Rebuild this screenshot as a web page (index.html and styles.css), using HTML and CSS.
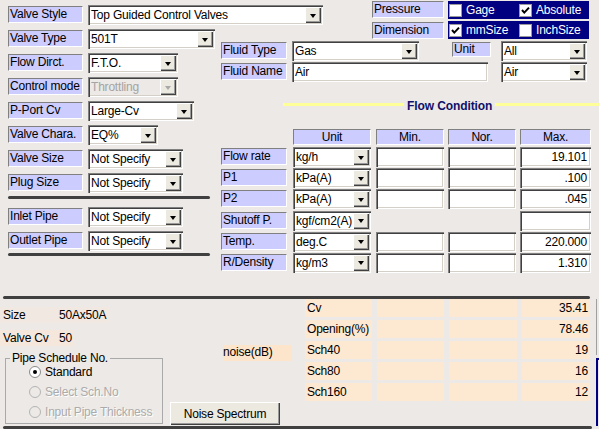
FILE: index.html
```html
<!DOCTYPE html>
<html>
<head>
<meta charset="utf-8">
<title>Valve Sizing</title>
<link rel="stylesheet" href="styles.css">
</head>
<body>
<div class="page">
  <div class="top">
    <div class="left">
      <div class="row"><span class="lab">Valve Style</span><div class="sel w235"><span class="txt">Top Guided Control Valves</span><span class="arr"></span></div></div>
      <div class="row"><span class="lab">Valve Type</span><div class="sel w127"><span class="txt">501T</span><span class="arr"></span></div></div>
      <div class="row"><span class="lab">Flow Dirct.</span><div class="sel w90"><span class="txt">F.T.O.</span><span class="arr"></span></div></div>
      <div class="row"><span class="lab">Control mode</span><div class="sel w90 dis"><span class="txt">Throttling</span><span class="arr"></span></div></div>
      <div class="row"><span class="lab">P-Port Cv</span><div class="sel w106"><span class="txt">Large-Cv</span><span class="arr"></span></div></div>
      <div class="row"><span class="lab">Valve Chara.</span><div class="sel w70"><span class="txt">EQ%</span><span class="arr"></span></div></div>
      <div class="row"><span class="lab">Valve Size</span><div class="sel w95"><span class="txt">Not Specify</span><span class="arr"></span></div></div>
      <div class="row"><span class="lab">Plug Size</span><div class="sel w95"><span class="txt">Not Specify</span><span class="arr"></span></div></div>
      <div class="sep sep1"></div>
      <div class="row"><span class="lab">Inlet Pipe</span><div class="sel w95"><span class="txt">Not Specify</span><span class="arr"></span></div></div>
      <div class="row"><span class="lab">Outlet Pipe</span><div class="sel w95"><span class="txt">Not Specify</span><span class="arr"></span></div></div>
      <div class="sep sep2"></div>
    </div>

    <div class="right">
      <div class="opts">
        <div class="optlabs">
          <span class="lab">Pressure</span>
          <span class="lab">Dimension</span>
        </div>
        <div class="navyrows">
          <div class="navy">
            <span class="chk"><svg width="13" height="13" viewBox="0 0 13 13"><rect x="0.5" y="0.5" width="12" height="12" fill="#fff" stroke="#9a9a9a"/></svg>Gage</span>
            <span class="chk"><svg width="13" height="13" viewBox="0 0 13 13"><rect x="0.5" y="0.5" width="12" height="12" fill="#fff" stroke="#9a9a9a"/><polyline points="3,6 5.3,8.6 10,3.6" fill="none" stroke="#000" stroke-width="2"/></svg>Absolute</span>
          </div>
          <div class="navy">
            <span class="chk"><svg width="13" height="13" viewBox="0 0 13 13"><rect x="0.5" y="0.5" width="12" height="12" fill="#fff" stroke="#9a9a9a"/><polyline points="3,6 5.3,8.6 10,3.6" fill="none" stroke="#000" stroke-width="2"/></svg>mmSize</span>
            <span class="chk"><svg width="13" height="13" viewBox="0 0 13 13"><rect x="0.5" y="0.5" width="12" height="12" fill="#fff" stroke="#9a9a9a"/></svg>InchSize</span>
          </div>
        </div>
      </div>

      <div class="frow f1">
        <span class="lab flab">Fluid Type</span>
        <div class="sel fsel"><span class="txt">Gas</span><span class="arr"></span></div>
        <span class="lab ulab">Unit</span>
        <div class="sel usel"><span class="txt">All</span><span class="arr"></span></div>
      </div>
      <div class="frow f2">
        <span class="lab flab">Fluid Name</span>
        <div class="inp finp"><span class="txt">Air</span></div>
        <div class="sel usel u2"><span class="txt">Air</span><span class="arr"></span></div>
      </div>

      <div class="fc"><span class="ln ln1"></span><span class="fctext">Flow Condition</span><span class="ln ln2"></span></div>

      <div class="thead">
        <span class="c-lab"></span>
        <span class="lab hc c-unit">Unit</span>
        <span class="lab hc c-min">Min.</span>
        <span class="lab hc c-nor">Nor.</span>
        <span class="lab hc c-max">Max.</span>
      </div>
      <div class="tbody">
        <div class="trow">
          <span class="lab c-lab">Flow rate</span>
          <div class="sel c-unit"><span class="txt">kg/h</span><span class="arr"></span></div>
          <div class="inp c-min"></div><div class="inp c-nor"></div>
          <div class="inp c-max num">19.101</div>
        </div>
        <div class="trow">
          <span class="lab c-lab">P1</span>
          <div class="sel c-unit"><span class="txt">kPa(A)</span><span class="arr"></span></div>
          <div class="inp c-min"></div><div class="inp c-nor"></div>
          <div class="inp c-max num">.100</div>
        </div>
        <div class="trow">
          <span class="lab c-lab">P2</span>
          <div class="sel c-unit"><span class="txt">kPa(A)</span><span class="arr"></span></div>
          <div class="inp c-min"></div><div class="inp c-nor"></div>
          <div class="inp c-max num">.045</div>
        </div>
        <div class="trow">
          <span class="lab c-lab">Shutoff P.</span>
          <div class="sel c-unit"><span class="txt">kgf/cm2(A)</span><span class="arr"></span></div>
          <div class="inp c-min hide"></div><div class="inp c-nor hide"></div>
          <div class="inp c-max num"></div>
        </div>
        <div class="trow">
          <span class="lab c-lab">Temp.</span>
          <div class="sel c-unit"><span class="txt">deg.C</span><span class="arr"></span></div>
          <div class="inp c-min"></div><div class="inp c-nor"></div>
          <div class="inp c-max num">220.000</div>
        </div>
        <div class="trow">
          <span class="lab c-lab">R/Density</span>
          <div class="sel c-unit"><span class="txt">kg/m3</span><span class="arr"></span></div>
          <div class="inp c-min"></div><div class="inp c-nor"></div>
          <div class="inp c-max num">1.310</div>
        </div>
      </div>
    </div>
  </div>

  <div class="hsep"></div>

  <div class="bottom">
    <div class="bl">
      <div class="colA">
        <div class="info i1"><span class="ik">Size</span><span class="iv">50Ax50A</span></div>
        <div class="info i2"><span class="ik">Valve Cv</span><span class="iv">50</span></div>
        <fieldset class="grp">
          <legend>Pipe Schedule No.</legend>
          <div class="radios">
            <div class="rad"><svg width="12" height="12" viewBox="0 0 12 12"><circle cx="6" cy="6" r="5.5" fill="#fff" stroke="#8a8a8a"/><circle cx="6" cy="6" r="2" fill="#000"/></svg><span>Standard</span></div>
            <div class="rad off"><svg width="12" height="12" viewBox="0 0 12 12"><circle cx="6" cy="6" r="5.5" fill="#ece9e6" stroke="#b4b4b4"/></svg><span>Select Sch.No</span></div>
            <div class="rad off"><svg width="12" height="12" viewBox="0 0 12 12"><circle cx="6" cy="6" r="5.5" fill="#ece9e6" stroke="#b4b4b4"/></svg><span>Input Pipe Thickness</span></div>
          </div>
        </fieldset>
      </div>
      <div class="colB">
        <span class="noise">noise(dB)</span>
        <button class="btn" type="button">Noise Spectrum</button>
      </div>
    </div>
    <div class="br">
      <span class="pc pl">Cv</span><span class="pc"></span><span class="pc"></span><span class="pc pv">35.41</span>
      <span class="pc pl">Opening(%)</span><span class="pc"></span><span class="pc"></span><span class="pc pv">78.46</span>
      <span class="pc pl">Sch40</span><span class="pc"></span><span class="pc"></span><span class="pc pv">19</span>
      <span class="pc pl">Sch80</span><span class="pc"></span><span class="pc"></span><span class="pc pv">16</span>
      <span class="pc pl">Sch160</span><span class="pc"></span><span class="pc"></span><span class="pc pv">12</span>
    </div>
    <div class="edge"><span class="edge-top"></span><span class="edge-nav"></span></div>
  </div>

  <div class="hsep hsep2"></div>
</div>
</body>
</html>
```

FILE: styles.css
```css
* { box-sizing: border-box; }

body {
  margin: 0;
  background: #ece9e6;
  font-family: "Liberation Sans", Arial, sans-serif;
  font-size: 12px;
  letter-spacing: -0.2px;
  color: #000;
}

.page {
  width: 599px;
  height: 429px;
  overflow: hidden;
}

/* ---------- generic controls ---------- */
.lab {
  display: block;
  flex-shrink: 0;
  background: #ccccff;
  border: 1px solid;
  border-color: #808080 #ffffff #ffffff #808080;
  height: 17px;
  line-height: 15px;
  padding-left: 1px;
  white-space: nowrap;
  overflow: hidden;
}

.sel, .inp {
  display: flex;
  flex-shrink: 0;
  height: 20px;
  padding: 2px;
  background: #fff;
  box-shadow: inset 1px 1px #808080, inset 2px 2px #404040,
              inset -1px -1px #ffffff, inset -2px -2px #d4d0c8;
  white-space: nowrap;
  overflow: hidden;
}

.txt {
  flex: 1;
  min-width: 0;
  overflow: hidden;
  line-height: 16px;
  padding-left: 1px;
}

.arr {
  flex-shrink: 0;
  width: 16px;
  height: 16px;
  background: #ece9e0;
  box-shadow: inset 1px 1px #ffffff, inset -1px -1px #404040, inset -2px -2px #9a9a9a;
  display: flex;
  align-items: center;
  justify-content: center;
}

.arr::after {
  content: "";
  width: 0;
  height: 0;
  border-style: solid;
  border-width: 4px 3.5px 0 3.5px;
  border-color: #000 transparent transparent transparent;
  margin-top: 1px;
}

.sel.dis { background: #ece9e6; }
.sel.dis .txt { color: #a4a4a4; }
.sel.dis .arr::after { border-top-color: #a8a8a8; }

/* ---------- top area ---------- */
.top {
  display: flex;
  height: 296px;
}

.left {
  width: 221px;
  flex-shrink: 0;
  padding: 5px 0 0 8px;
  display: flex;
  flex-direction: column;
  gap: 4px;
}

.row {
  display: flex;
  align-items: flex-start;
  gap: 5px;
  height: 20px;
}

.left .lab {
  width: 75px;
  margin-top: 1px;
}

.w235 { width: 235px; }
.w127 { width: 127px; }
.w90 { width: 90px; }
.w106 { width: 106px; }
.w70 { width: 70px; }
.w95 { width: 95px; }

.sep {
  width: 202px;
  height: 3px;
  background: #404040;
  border-radius: 2px;
}
.sep1 { margin: -1px 0 4px; }
.sep2 { margin-top: -2px; }

.right {
  flex: 1;
  display: flex;
  flex-direction: column;
}

.opts {
  display: flex;
  gap: 4px;
  margin: 1px 0 0 151px;
}

.optlabs {
  display: flex;
  flex-direction: column;
  gap: 4px;
}
.optlabs .lab { width: 72px; }

.navyrows {
  display: flex;
  flex-direction: column;
  gap: 2px;
}

.navy {
  width: 141px;
  height: 18px;
  background: #000080;
  color: #fff;
  display: flex;
  align-items: center;
  padding-left: 1px;
}

.chk {
  display: flex;
  align-items: center;
  gap: 4px;
  width: 72px;
}
.chk svg { flex-shrink: 0; }

.frow {
  display: flex;
  align-items: flex-start;
  height: 20px;
}
.f1 { margin-top: 2px; }
.f2 { margin-top: 1px; }

.flab { width: 66px; margin-top: 1px; }
.fsel { width: 127px; margin-left: 5px; }
.ulab { width: 39px; height: 15px; line-height: 13px; margin: 1px 0 0 33px; }
.usel { width: 86px; margin-left: 10px; }
.finp { width: 196px; margin-left: 5px; }
.u2 { margin-left: 13px; }

.fc {
  display: flex;
  align-items: center;
  height: 14px;
  margin: 15px 0 0 62px;
}
.ln {
  height: 3px;
  background: #ffff99;
}
.ln1 { width: 121px; }
.ln2 { flex: 1; }
.fctext {
  font-weight: bold;
  color: #10106a;
  padding: 0 3px;
  margin-top: 4px;
  letter-spacing: -0.1px;
  white-space: nowrap;
}

.thead, .trow {
  display: flex;
  align-items: flex-start;
}
.thead { margin-top: 18px; height: 16px; }
.hc { height: 16px; line-height: 14px; text-align: center; padding: 0; }

.tbody {
  display: flex;
  flex-direction: column;
  gap: 1.2px;
  margin-top: 2px;
}
.trow { height: 20px; }

.c-lab { width: 66px; flex-shrink: 0; }
.trow .c-lab { margin-top: 1px; }
.c-unit { width: 78px; margin-left: 6px; }
.c-min { width: 68px; margin-left: 5px; }
.c-nor { width: 68px; margin-left: 4px; }
.c-max { width: 71px; margin-left: 4px; }

.num {
  justify-content: flex-end;
  line-height: 16px;
  padding-right: 4px;
}
.hide { visibility: hidden; }

/* ---------- separators ---------- */
.hsep {
  width: 587px;
  height: 3px;
  margin-left: 3px;
  background: #404040;
  border-radius: 2px;
}
.hsep2 { width: 589px; }

/* ---------- bottom ---------- */
.bottom {
  display: flex;
  height: 127px;
}

.bl {
  width: 305px;
  flex-shrink: 0;
  display: flex;
}

.colA {
  width: 165px;
  display: flex;
  flex-direction: column;
}

.info {
  display: flex;
  height: 16px;
  line-height: 16px;
}
.i1 { margin-top: 8px; }
.i2 { margin-top: 7px; }
.ik {
  width: 56px;
  padding-left: 3px;
  background: #f6e7dc;
}
.iv {
  padding: 0 2px 0 3px;
  background: #f6e7dc;
}
.i1 .ik { background: #f1e8e2; }
.i1 .iv { background: #f1e8e2; width: 54px; }

.grp {
  margin: 6px 0 0 5px;
  width: 158px;
  height: 72px;
  border: 1px solid #a9a9a9;
  padding: 0 0 0 4px;
}
.grp legend {
  padding: 0 2px;
  line-height: 13px;
}

.radios {
  display: flex;
  flex-direction: column;
  gap: 6px;
  margin-left: 19px;
}
.rad {
  display: flex;
  align-items: center;
  gap: 4px;
  height: 14px;
  white-space: nowrap;
}
.rad svg { flex-shrink: 0; }
.rad.off span {
  color: #ababab;
  text-shadow: 1px 1px #ffffff;
}

.colB {
  display: flex;
  flex-direction: column;
  align-items: flex-start;
}
.noise {
  margin: 46px 0 0 58px;
  width: 69px;
  height: 16px;
  line-height: 15px;
  background: #fde5cc;
}
.btn {
  margin: auto 0 1px 5px;
  width: 110px;
  height: 23px;
  font-family: "Liberation Sans", Arial, sans-serif;
  font-size: 12px;
  letter-spacing: -0.2px;
  color: #000;
  background: #ece9e0;
  border: none;
  padding: 0;
  box-shadow: inset 1px 1px #ffffff, inset -1px -1px #404040, inset -2px -2px #9a9a9a;
}

.br {
  width: 285px;
  flex-shrink: 0;
  display: grid;
  grid-template-columns: 67px 67px 68px 68px;
  grid-auto-rows: 18px;
  column-gap: 5px;
  row-gap: 3px;
  align-content: start;
}
.pc {
  background: #fde8d2;
  line-height: 18px;
  white-space: nowrap;
}
.pl { padding-left: 2px; }
.pv { text-align: right; padding-right: 2px; }

.edge {
  margin-left: 6px;
  width: 3px;
  display: flex;
  flex-direction: column;
}
.edge-top {
  height: 56px;
  border-left: 1px solid #a0a0a0;
}
.edge-nav {
  flex: 1;
  margin-top: 3px;
  border-left: 2px solid #000080;
  border-top: 2px solid #000080;
}
```
